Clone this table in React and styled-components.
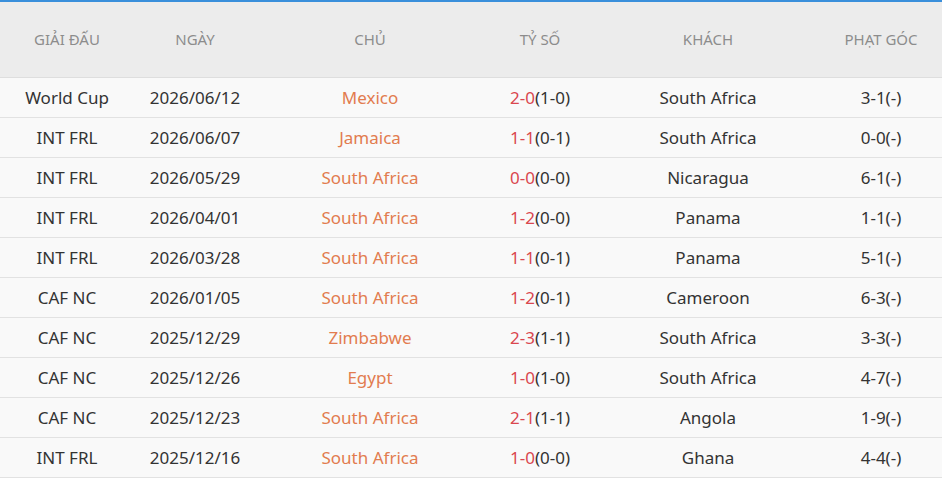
import React from 'react'
import styled, { createGlobalStyle } from 'styled-components'

const GlobalStyle = createGlobalStyle`
  body {
    margin: 0;
    background: #fff;
    font-family: "Noto Sans", "Open Sans", sans-serif;
  }
`

const matches = [
  ['World Cup', '2026/06/12', 'Mexico', '2-0', '(1-0)', 'South Africa', '3-1(-)'],
  ['INT FRL', '2026/06/07', 'Jamaica', '1-1', '(0-1)', 'South Africa', '0-0(-)'],
  ['INT FRL', '2026/05/29', 'South Africa', '0-0', '(0-0)', 'Nicaragua', '6-1(-)'],
  ['INT FRL', '2026/04/01', 'South Africa', '1-2', '(0-0)', 'Panama', '1-1(-)'],
  ['INT FRL', '2026/03/28', 'South Africa', '1-1', '(0-1)', 'Panama', '5-1(-)'],
  ['CAF NC', '2026/01/05', 'South Africa', '1-2', '(0-1)', 'Cameroon', '6-3(-)'],
  ['CAF NC', '2025/12/29', 'Zimbabwe', '2-3', '(1-1)', 'South Africa', '3-3(-)'],
  ['CAF NC', '2025/12/26', 'Egypt', '1-0', '(1-0)', 'South Africa', '4-7(-)'],
  ['CAF NC', '2025/12/23', 'South Africa', '2-1', '(1-1)', 'Angola', '1-9(-)'],
  ['INT FRL', '2025/12/16', 'South Africa', '1-0', '(0-0)', 'Ghana', '4-4(-)'],
]

const cols = '134px 122px 228px 112px 224px 122px'

const Table = styled.div`
  width: 942px;
  border-top: 2px solid #3a8fdb;
`

const HeadRow = styled.div`
  display: grid;
  grid-template-columns: ${cols};
  height: 75px;
  align-items: center;
  background: #ececec;
  border-bottom: 1px solid #dedede;
`

const HeadCell = styled.div`
  text-align: center;
  font-size: 15px;
  color: #8c8c8c;
  text-transform: uppercase;
  padding-bottom: 1px;
`

const Row = styled.div`
  display: grid;
  grid-template-columns: ${cols};
  height: 39px;
  align-items: center;
  background: #f9f9f9;
  border-bottom: 1px solid #e2e2e2;
`

const Cell = styled.div`
  text-align: center;
  font-size: 17px;
  color: ${p => (p.$home ? '#e27c4f' : '#333')};
  white-space: nowrap;
`

const Score = styled.span`
  color: #d9474f;
`

export default function App() {
  return (
    <>
      <GlobalStyle />
      <Table>
        <HeadRow>
          <HeadCell>Giải đấu</HeadCell>
          <HeadCell>Ngày</HeadCell>
          <HeadCell>Chủ</HeadCell>
          <HeadCell>Tỷ số</HeadCell>
          <HeadCell>Khách</HeadCell>
          <HeadCell>Phạt góc</HeadCell>
        </HeadRow>
        {matches.map((m, i) => (
          <Row key={i}>
            <Cell>{m[0]}</Cell>
            <Cell>{m[1]}</Cell>
            <Cell $home>{m[2]}</Cell>
            <Cell>
              <Score>{m[3]}</Score>
              {m[4]}
            </Cell>
            <Cell>{m[5]}</Cell>
            <Cell>{m[6]}</Cell>
          </Row>
        ))}
      </Table>
    </>
  )
}
